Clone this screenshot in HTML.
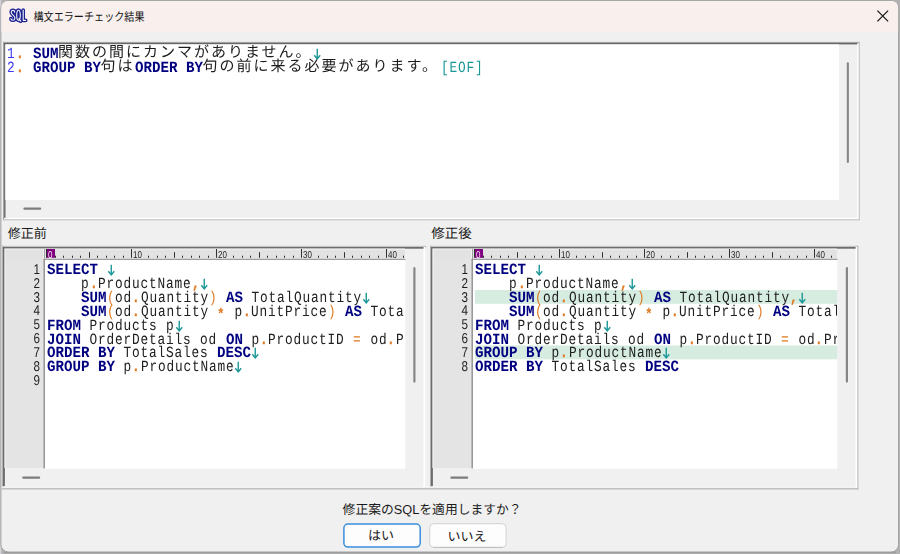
<!DOCTYPE html>
<html lang="ja"><head><meta charset="utf-8"><title>構文エラーチェック結果</title>
<style>
html,body{margin:0;padding:0}
body{width:900px;height:554px;position:relative;overflow:hidden;background:#b2b2b2;font-family:"Liberation Sans",sans-serif;text-rendering:geometricPrecision}
#chrome{position:absolute;left:0;top:0}
.pane{position:absolute;overflow:hidden;will-change:transform}
.r{position:absolute;left:0;height:14px;line-height:14px;white-space:pre;font-family:"Liberation Mono",monospace;font-size:15.6px;color:#202020}
.r span{position:absolute;top:0;transform:scaleX(.82);transform-origin:0 0;letter-spacing:1.006px}
.r span.k{transform:scaleX(.9081);letter-spacing:0}
.r span.j{transform:none}
.k{color:#000080;font-weight:bold}
.s{color:#df7a23}
.r span.e{transform:none}
.ar{position:absolute;left:0;top:0;overflow:visible}
.f{color:#1b9696}
.d{color:#df7a23;font-weight:bold;-webkit-text-stroke:0.25px #df7a23}
.r span.a{color:#df7a23;font-weight:bold;top:3px}
.n{color:#3d3df0}
.j{height:14px;overflow:visible}
.j i{position:absolute;left:0;top:0;font-style:normal;font-family:"Liberation Mono","Noto Sans CJK JP",monospace;font-size:15px;line-height:14px;letter-spacing:2px;color:#1c1c1c;white-space:nowrap}
.ln{position:absolute;width:30px;height:14px;line-height:14px;text-align:right;font-size:14.2px;color:#1e1e1e;transform:scaleX(.82);transform-origin:100% 0;margin-top:-0.4px}
.rn{position:absolute;top:1.5px;height:9px;line-height:9px;font-size:10px;color:#1e1e1e;transform:scaleX(.8);transform-origin:0 0}
.rn.z{color:#f4e6f4}
#uitext text{font-family:"Liberation Sans","Noto Sans CJK JP",sans-serif}
</style></head><body>
<svg id="chrome" width="900" height="554" viewBox="0 0 900 554">
<rect x="0" y="0" width="900" height="554" fill="#b2b2b2"/>
<rect x="0" y="0" width="1.3" height="554" fill="#d2d2d8"/>
<rect x="4" y="551.5" width="892" height="1.7" fill="#9a9a9a"/>
<rect x="0.9" y="0.6" width="897.7" height="551.4" rx="7.5" fill="#f0f0f0" stroke="#a2a2a2" stroke-width="1"/>
<path fill="#f9f0ee" d="M1.4 32.3V8.1Q1.4 1.1 8.4 1.1H891.1Q898.1 1.1 898.1 8.1V32.3Z"/>
<rect x="3" y="41.9" width="856.8" height="1.1" fill="#a3a3a3"/>
<rect x="4.1" y="43" width="854.6" height="1.4" fill="#666666"/>
<rect x="3" y="41.9" width="1.1" height="178.4" fill="#a3a3a3"/>
<rect x="4.1" y="43" width="1.4" height="176.2" fill="#666666"/>
<rect x="4.1" y="217.8" width="854.6" height="1.4" fill="#ffffff"/>
<rect x="3" y="219.2" width="856.8" height="1.1" fill="#c2c2c2"/>
<rect x="857.3" y="43" width="1.4" height="176.2" fill="#ffffff"/>
<rect x="858.7" y="41.9" width="1.1" height="178.4" fill="#c2c2c2"/>
<rect x="5.3" y="44.4" width="833.7" height="155.5" fill="#ffffff"/>
<rect x="846.8" y="62.2" width="2.1" height="100.8" rx="1" fill="#868686"/>
<rect x="23.4" y="207.4" width="17.8" height="2.3" rx="1" fill="#7c7c7c"/>
<rect x="2" y="245.8" width="424.4" height="1.2" fill="#c4c4c4"/>
<rect x="3.2" y="247" width="422" height="1.7" fill="#6c6c6c"/>
<rect x="2" y="245.8" width="1.2" height="240.9" fill="#b0b0b0"/>
<rect x="3" y="247" width="1.9" height="239.2" fill="#6c6c6c"/>
<rect x="423.5" y="247" width="1.7" height="239.7" fill="#ffffff"/>
<rect x="4.7" y="248.7" width="400.2" height="10.2" fill="#e2e2e2"/>
<rect x="43.4" y="258.8" width="361.9" height="1.3" fill="#9e9e9e"/>
<rect x="4.7" y="248.7" width="400.2" height="0.8" fill="#f3f3f3"/>
<rect x="4.7" y="258.8" width="38.5" height="209.1" fill="#e4e4e4"/>
<rect x="4.5" y="248.7" width="1" height="219.2" fill="#f3f3f3"/>
<rect x="43.2" y="249" width="0.9" height="10" fill="#f6f6f6"/>
<rect x="44" y="249" width="1" height="10" fill="#a0a0a0"/>
<rect x="43.4" y="259" width="1.6" height="209.3" fill="#989898"/>
<rect x="45" y="260.1" width="360.3" height="208.7" fill="#ffffff"/>
<rect x="46" y="249" width="1" height="8.8" fill="#303030"/>
<rect x="55" y="255.7" width="1" height="2.1" fill="#303030"/>
<rect x="63" y="255.7" width="1" height="2.1" fill="#303030"/>
<rect x="72" y="255.7" width="1" height="2.1" fill="#303030"/>
<rect x="80" y="255.7" width="1" height="2.1" fill="#303030"/>
<rect x="89" y="252.2" width="1" height="5.6" fill="#303030"/>
<rect x="97" y="255.7" width="1" height="2.1" fill="#303030"/>
<rect x="106" y="255.7" width="1" height="2.1" fill="#303030"/>
<rect x="114" y="255.7" width="1" height="2.1" fill="#303030"/>
<rect x="123" y="255.7" width="1" height="2.1" fill="#303030"/>
<rect x="131" y="249" width="1" height="8.8" fill="#303030"/>
<rect x="148" y="255.7" width="1" height="2.1" fill="#303030"/>
<rect x="157" y="255.7" width="1" height="2.1" fill="#303030"/>
<rect x="165" y="255.7" width="1" height="2.1" fill="#303030"/>
<rect x="174" y="252.2" width="1" height="5.6" fill="#303030"/>
<rect x="182" y="255.7" width="1" height="2.1" fill="#303030"/>
<rect x="191" y="255.7" width="1" height="2.1" fill="#303030"/>
<rect x="199" y="255.7" width="1" height="2.1" fill="#303030"/>
<rect x="208" y="255.7" width="1" height="2.1" fill="#303030"/>
<rect x="216" y="249" width="1" height="8.8" fill="#303030"/>
<rect x="233" y="255.7" width="1" height="2.1" fill="#303030"/>
<rect x="242" y="255.7" width="1" height="2.1" fill="#303030"/>
<rect x="250" y="255.7" width="1" height="2.1" fill="#303030"/>
<rect x="259" y="252.2" width="1" height="5.6" fill="#303030"/>
<rect x="267" y="255.7" width="1" height="2.1" fill="#303030"/>
<rect x="276" y="255.7" width="1" height="2.1" fill="#303030"/>
<rect x="284" y="255.7" width="1" height="2.1" fill="#303030"/>
<rect x="293" y="255.7" width="1" height="2.1" fill="#303030"/>
<rect x="301" y="249" width="1" height="8.8" fill="#303030"/>
<rect x="318" y="255.7" width="1" height="2.1" fill="#303030"/>
<rect x="327" y="255.7" width="1" height="2.1" fill="#303030"/>
<rect x="335" y="255.7" width="1" height="2.1" fill="#303030"/>
<rect x="344" y="252.2" width="1" height="5.6" fill="#303030"/>
<rect x="352" y="255.7" width="1" height="2.1" fill="#303030"/>
<rect x="361" y="255.7" width="1" height="2.1" fill="#303030"/>
<rect x="369" y="255.7" width="1" height="2.1" fill="#303030"/>
<rect x="378" y="255.7" width="1" height="2.1" fill="#303030"/>
<rect x="386" y="249" width="1" height="8.8" fill="#303030"/>
<rect x="403" y="255.7" width="1" height="2.1" fill="#303030"/>
<rect x="47" y="249" width="8" height="8.8" fill="#800080"/>
<rect x="413.3" y="267" width="2.2" height="115.7" rx="1.1" fill="#868686"/>
<rect x="22.2" y="476.6" width="18" height="2.2" rx="1.1" fill="#7c7c7c"/>
<rect x="430" y="245.8" width="428.5" height="1.2" fill="#c4c4c4"/>
<rect x="431.2" y="247" width="426.1" height="1.7" fill="#6c6c6c"/>
<rect x="430" y="245.8" width="1.2" height="240.9" fill="#b0b0b0"/>
<rect x="431" y="247" width="1.9" height="239.2" fill="#6c6c6c"/>
<rect x="855.6" y="247" width="1.7" height="239.7" fill="#ffffff"/>
<rect x="857.3" y="245.8" width="1.2" height="243.8" fill="#c2c2c2"/>
<rect x="432.7" y="248.7" width="404.2" height="10.2" fill="#e2e2e2"/>
<rect x="471.4" y="258.8" width="365.9" height="1.3" fill="#9e9e9e"/>
<rect x="432.7" y="248.7" width="404.2" height="0.8" fill="#f3f3f3"/>
<rect x="432.7" y="258.8" width="38.5" height="209.1" fill="#e4e4e4"/>
<rect x="432.5" y="248.7" width="1" height="219.2" fill="#f3f3f3"/>
<rect x="471.2" y="249" width="0.9" height="10" fill="#f6f6f6"/>
<rect x="472" y="249" width="1" height="10" fill="#a0a0a0"/>
<rect x="471.4" y="259" width="1.6" height="209.3" fill="#989898"/>
<rect x="473" y="260.1" width="364.3" height="208.7" fill="#ffffff"/>
<rect x="474" y="249" width="1" height="8.8" fill="#303030"/>
<rect x="483" y="255.7" width="1" height="2.1" fill="#303030"/>
<rect x="491" y="255.7" width="1" height="2.1" fill="#303030"/>
<rect x="500" y="255.7" width="1" height="2.1" fill="#303030"/>
<rect x="508" y="255.7" width="1" height="2.1" fill="#303030"/>
<rect x="517" y="252.2" width="1" height="5.6" fill="#303030"/>
<rect x="525" y="255.7" width="1" height="2.1" fill="#303030"/>
<rect x="534" y="255.7" width="1" height="2.1" fill="#303030"/>
<rect x="542" y="255.7" width="1" height="2.1" fill="#303030"/>
<rect x="551" y="255.7" width="1" height="2.1" fill="#303030"/>
<rect x="559" y="249" width="1" height="8.8" fill="#303030"/>
<rect x="576" y="255.7" width="1" height="2.1" fill="#303030"/>
<rect x="585" y="255.7" width="1" height="2.1" fill="#303030"/>
<rect x="593" y="255.7" width="1" height="2.1" fill="#303030"/>
<rect x="602" y="252.2" width="1" height="5.6" fill="#303030"/>
<rect x="610" y="255.7" width="1" height="2.1" fill="#303030"/>
<rect x="619" y="255.7" width="1" height="2.1" fill="#303030"/>
<rect x="627" y="255.7" width="1" height="2.1" fill="#303030"/>
<rect x="636" y="255.7" width="1" height="2.1" fill="#303030"/>
<rect x="644" y="249" width="1" height="8.8" fill="#303030"/>
<rect x="661" y="255.7" width="1" height="2.1" fill="#303030"/>
<rect x="670" y="255.7" width="1" height="2.1" fill="#303030"/>
<rect x="678" y="255.7" width="1" height="2.1" fill="#303030"/>
<rect x="687" y="252.2" width="1" height="5.6" fill="#303030"/>
<rect x="695" y="255.7" width="1" height="2.1" fill="#303030"/>
<rect x="704" y="255.7" width="1" height="2.1" fill="#303030"/>
<rect x="712" y="255.7" width="1" height="2.1" fill="#303030"/>
<rect x="721" y="255.7" width="1" height="2.1" fill="#303030"/>
<rect x="729" y="249" width="1" height="8.8" fill="#303030"/>
<rect x="746" y="255.7" width="1" height="2.1" fill="#303030"/>
<rect x="755" y="255.7" width="1" height="2.1" fill="#303030"/>
<rect x="763" y="255.7" width="1" height="2.1" fill="#303030"/>
<rect x="772" y="252.2" width="1" height="5.6" fill="#303030"/>
<rect x="780" y="255.7" width="1" height="2.1" fill="#303030"/>
<rect x="789" y="255.7" width="1" height="2.1" fill="#303030"/>
<rect x="797" y="255.7" width="1" height="2.1" fill="#303030"/>
<rect x="806" y="255.7" width="1" height="2.1" fill="#303030"/>
<rect x="814" y="249" width="1" height="8.8" fill="#303030"/>
<rect x="831" y="255.7" width="1" height="2.1" fill="#303030"/>
<rect x="475" y="249" width="8" height="8.8" fill="#800080"/>
<rect x="845.8" y="267" width="2.2" height="115.7" rx="1.1" fill="#868686"/>
<rect x="450.3" y="476.6" width="18" height="2.2" rx="1.1" fill="#7c7c7c"/>
<rect x="2" y="486.7" width="855.3" height="1.2" fill="#ffffff"/>
<rect x="2" y="487.8" width="856.5" height="1.8" fill="#c2c2c2"/>
<rect x="475" y="289.95" width="362.3" height="13.875" fill="#d6ece1"/>
<rect x="475" y="345.45" width="362.3" height="13.875" fill="#d6ece1"/>
<rect x="343.9" y="524.0" width="76.3" height="23.1" rx="4" fill="#fdfdfd" stroke="#3a8edb" stroke-width="1.5"/>
<rect x="429.8" y="523.7" width="76.3" height="23.7" rx="4" fill="#fdfdfd" stroke="#d2d2d2" stroke-width="1"/>
<path d="M433 547.4H503" stroke="#bcbcbc" stroke-width="1" fill="none"/>
<path d="M877.4 10.6L888.1 21.4M888.1 10.6L877.4 21.4" stroke="#1b1b1b" stroke-width="1.3" fill="none"/>
<path d="M14.7 12.1C14.5 9.9 11.2 9.8 11.2 12.3C11.2 14.9 14.9 15.3 14.9 18.1C14.9 20.9 11.1 20.8 10.9 18.6M18.5 10.2C16.9 10.2 16.7 12.5 16.7 15.3C16.7 18.1 16.9 20.4 18.5 20.4C20.1 20.4 20.3 18.1 20.3 15.3C20.3 12.5 20.1 10.2 18.5 10.2ZM18.9 18.6L20.7 21.2M23.2 10V20.3H25.7" stroke="#fdfbfb" stroke-width="5" fill="none" stroke-linecap="round" stroke-linejoin="round" opacity="0.8"/>
<path d="M14.7 12.1C14.5 9.9 11.2 9.8 11.2 12.3C11.2 14.9 14.9 15.3 14.9 18.1C14.9 20.9 11.1 20.8 10.9 18.6M18.5 10.2C16.9 10.2 16.7 12.5 16.7 15.3C16.7 18.1 16.9 20.4 18.5 20.4C20.1 20.4 20.3 18.1 20.3 15.3C20.3 12.5 20.1 10.2 18.5 10.2ZM18.9 18.6L20.7 21.2M23.2 10V20.3H25.7" stroke="#1e1e8c" stroke-width="3.7" fill="none" stroke-linecap="round" stroke-linejoin="round"/>
<path d="M14.7 12.1C14.5 9.9 11.2 9.8 11.2 12.3C11.2 14.9 14.9 15.3 14.9 18.1C14.9 20.9 11.1 20.8 10.9 18.6M18.5 10.2C16.9 10.2 16.7 12.5 16.7 15.3C16.7 18.1 16.9 20.4 18.5 20.4C20.1 20.4 20.3 18.1 20.3 15.3C20.3 12.5 20.1 10.2 18.5 10.2ZM18.9 18.6L20.7 21.2M23.2 10V20.3H25.7" stroke="#e8f2fb" stroke-width="1.15" fill="none" stroke-linecap="round" stroke-linejoin="round"/>
<g id="uitext">
<text x="33.5" y="21" font-size="12" fill="#161616" textLength="111" lengthAdjust="spacingAndGlyphs">構文エラーチェック結果</text>
<text x="7.8" y="238" font-size="13" fill="#1a1a1a">修正前</text>
<text x="431.2" y="237.8" font-size="13.5" fill="#1a1a1a">修正後</text>
<text x="342.6" y="513.6" font-size="13" fill="#1a1a1a" textLength="179" lengthAdjust="spacingAndGlyphs">修正案のSQLを適用しますか？</text>
<text x="368" y="540.2" font-size="13" fill="#1a1a1a">はい</text>
<text x="447.5" y="540.6" font-size="13" fill="#1a1a1a">いいえ</text>
</g>
</svg>
<div class="pane" style="left:5px;top:44px;width:834px;height:156px">
<div class="r" style="top:3px"><span class="n" style="left:2px">1</span><span class="d" style="left:10.5px">.</span><span style="left:19px"> </span><span class="k" style="left:27.5px">SUM</span><span class="j" style="left:53px;width:255px"><i>関数の間にカンマがありません。</i></span><span class="e" style="left:308px"><svg class="ar" width="9" height="15" viewBox="0 0 9 15"><path d="M4.25 1.7V11.5M1.3 8.3L4.25 12L7.2 8.3" stroke="#1d9898" stroke-width="1.4" fill="none" stroke-linejoin="miter"/></svg></span></div>
<div class="r" style="top:17px"><span class="n" style="left:2px">2</span><span class="d" style="left:10.5px">.</span><span style="left:19px"> </span><span class="k" style="left:27.5px">GROUP BY</span><span class="j" style="left:95.5px;width:34px"><i>句は</i></span><span class="k" style="left:129.5px">ORDER BY</span><span class="j" style="left:197.5px;width:238px"><i>句の前に来る必要があります。</i></span><span class="f" style="left:435.5px">[EOF]</span></div>
</div>
<div class="pane" style="left:5px;top:249px;width:400px;height:220px">
<div class="rn z" style="left:43.2px">0</div><div class="rn" style="left:127.5px">10</div><div class="rn" style="left:212.5px">20</div><div class="rn" style="left:297.5px">30</div><div class="rn" style="left:382.5px">40</div><div class="ln" style="top:14.2px;left:5px">1</div><div class="ln" style="top:28.075px;left:5px">2</div><div class="ln" style="top:41.95px;left:5px">3</div><div class="ln" style="top:55.825px;left:5px">4</div><div class="ln" style="top:69.7px;left:5px">5</div><div class="ln" style="top:83.575px;left:5px">6</div><div class="ln" style="top:97.45px;left:5px">7</div><div class="ln" style="top:111.325px;left:5px">8</div><div class="ln" style="top:125.2px;left:5px">9</div>
<div class="r" style="top:14.2px"><span class="k" style="left:42px">SELECT</span><span style="left:93px"> </span><span class="e" style="left:101.5px"><svg class="ar" width="9" height="15" viewBox="0 0 9 15"><path d="M4.25 1.7V11.5M1.3 8.3L4.25 12L7.2 8.3" stroke="#1d9898" stroke-width="1.4" fill="none" stroke-linejoin="miter"/></svg></span></div>
<div class="r" style="top:28.075px"><span style="left:42px">    p</span><span class="d" style="left:84.5px">.</span><span style="left:93px">ProductName</span><span class="d" style="left:186.5px">,</span><span class="e" style="left:195px"><svg class="ar" width="9" height="15" viewBox="0 0 9 15"><path d="M4.25 1.7V11.5M1.3 8.3L4.25 12L7.2 8.3" stroke="#1d9898" stroke-width="1.4" fill="none" stroke-linejoin="miter"/></svg></span></div>
<div class="r" style="top:41.95px"><span style="left:42px">    </span><span class="k" style="left:76px">SUM</span><span class="s" style="left:101.5px">(</span><span style="left:110px">od</span><span class="d" style="left:127px">.</span><span style="left:135.5px">Quantity</span><span class="s" style="left:203.5px">)</span><span style="left:212px"> </span><span class="k" style="left:220.5px">AS</span><span style="left:237.5px"> TotalQuantity</span><span class="e" style="left:356.5px"><svg class="ar" width="9" height="15" viewBox="0 0 9 15"><path d="M4.25 1.7V11.5M1.3 8.3L4.25 12L7.2 8.3" stroke="#1d9898" stroke-width="1.4" fill="none" stroke-linejoin="miter"/></svg></span></div>
<div class="r" style="top:55.825px"><span style="left:42px">    </span><span class="k" style="left:76px">SUM</span><span class="s" style="left:101.5px">(</span><span style="left:110px">od</span><span class="d" style="left:127px">.</span><span style="left:135.5px">Quantity </span><span class="a" style="left:212px">*</span><span style="left:220.5px"> p</span><span class="d" style="left:237.5px">.</span><span style="left:246px">UnitPrice</span><span class="s" style="left:322.5px">)</span><span style="left:331px"> </span><span class="k" style="left:339.5px">AS</span><span style="left:356.5px"> TotalSales</span><span class="e" style="left:450px"><svg class="ar" width="9" height="15" viewBox="0 0 9 15"><path d="M4.25 1.7V11.5M1.3 8.3L4.25 12L7.2 8.3" stroke="#1d9898" stroke-width="1.4" fill="none" stroke-linejoin="miter"/></svg></span></div>
<div class="r" style="top:69.7px"><span class="k" style="left:42px">FROM</span><span style="left:76px"> Products p</span><span class="e" style="left:169.5px"><svg class="ar" width="9" height="15" viewBox="0 0 9 15"><path d="M4.25 1.7V11.5M1.3 8.3L4.25 12L7.2 8.3" stroke="#1d9898" stroke-width="1.4" fill="none" stroke-linejoin="miter"/></svg></span></div>
<div class="r" style="top:83.575px"><span class="k" style="left:42px">JOIN</span><span style="left:76px"> OrderDetails od </span><span class="k" style="left:220.5px">ON</span><span style="left:237.5px"> p</span><span class="d" style="left:254.5px">.</span><span style="left:263px">ProductID </span><span class="s" style="left:348px">=</span><span style="left:356.5px"> od</span><span class="d" style="left:382px">.</span><span style="left:390.5px">ProductID</span><span class="e" style="left:467px"><svg class="ar" width="9" height="15" viewBox="0 0 9 15"><path d="M4.25 1.7V11.5M1.3 8.3L4.25 12L7.2 8.3" stroke="#1d9898" stroke-width="1.4" fill="none" stroke-linejoin="miter"/></svg></span></div>
<div class="r" style="top:97.45px"><span class="k" style="left:42px">ORDER BY</span><span style="left:110px"> TotalSales </span><span class="k" style="left:212px">DESC</span><span class="e" style="left:246px"><svg class="ar" width="9" height="15" viewBox="0 0 9 15"><path d="M4.25 1.7V11.5M1.3 8.3L4.25 12L7.2 8.3" stroke="#1d9898" stroke-width="1.4" fill="none" stroke-linejoin="miter"/></svg></span></div>
<div class="r" style="top:111.325px"><span class="k" style="left:42px">GROUP BY</span><span style="left:110px"> p</span><span class="d" style="left:127px">.</span><span style="left:135.5px">ProductName</span><span class="e" style="left:229px"><svg class="ar" width="9" height="15" viewBox="0 0 9 15"><path d="M4.25 1.7V11.5M1.3 8.3L4.25 12L7.2 8.3" stroke="#1d9898" stroke-width="1.4" fill="none" stroke-linejoin="miter"/></svg></span></div>
</div>
<div class="pane" style="left:433px;top:249px;width:404px;height:220px">
<div class="rn z" style="left:43.2px">0</div><div class="rn" style="left:127.5px">10</div><div class="rn" style="left:212.5px">20</div><div class="rn" style="left:297.5px">30</div><div class="rn" style="left:382.5px">40</div><div class="ln" style="top:14.2px;left:5px">1</div><div class="ln" style="top:28.075px;left:5px">2</div><div class="ln" style="top:41.95px;left:5px">3</div><div class="ln" style="top:55.825px;left:5px">4</div><div class="ln" style="top:69.7px;left:5px">5</div><div class="ln" style="top:83.575px;left:5px">6</div><div class="ln" style="top:97.45px;left:5px">7</div><div class="ln" style="top:111.325px;left:5px">8</div>
<div class="r" style="top:14.2px"><span class="k" style="left:42px">SELECT</span><span style="left:93px"> </span><span class="e" style="left:101.5px"><svg class="ar" width="9" height="15" viewBox="0 0 9 15"><path d="M4.25 1.7V11.5M1.3 8.3L4.25 12L7.2 8.3" stroke="#1d9898" stroke-width="1.4" fill="none" stroke-linejoin="miter"/></svg></span></div>
<div class="r" style="top:28.075px"><span style="left:42px">    p</span><span class="d" style="left:84.5px">.</span><span style="left:93px">ProductName</span><span class="d" style="left:186.5px">,</span><span class="e" style="left:195px"><svg class="ar" width="9" height="15" viewBox="0 0 9 15"><path d="M4.25 1.7V11.5M1.3 8.3L4.25 12L7.2 8.3" stroke="#1d9898" stroke-width="1.4" fill="none" stroke-linejoin="miter"/></svg></span></div>
<div class="r" style="top:41.95px"><span style="left:42px">    </span><span class="k" style="left:76px">SUM</span><span class="s" style="left:101.5px">(</span><span style="left:110px">od</span><span class="d" style="left:127px">.</span><span style="left:135.5px">Quantity</span><span class="s" style="left:203.5px">)</span><span style="left:212px"> </span><span class="k" style="left:220.5px">AS</span><span style="left:237.5px"> TotalQuantity</span><span class="d" style="left:356.5px">,</span><span class="e" style="left:365px"><svg class="ar" width="9" height="15" viewBox="0 0 9 15"><path d="M4.25 1.7V11.5M1.3 8.3L4.25 12L7.2 8.3" stroke="#1d9898" stroke-width="1.4" fill="none" stroke-linejoin="miter"/></svg></span></div>
<div class="r" style="top:55.825px"><span style="left:42px">    </span><span class="k" style="left:76px">SUM</span><span class="s" style="left:101.5px">(</span><span style="left:110px">od</span><span class="d" style="left:127px">.</span><span style="left:135.5px">Quantity </span><span class="a" style="left:212px">*</span><span style="left:220.5px"> p</span><span class="d" style="left:237.5px">.</span><span style="left:246px">UnitPrice</span><span class="s" style="left:322.5px">)</span><span style="left:331px"> </span><span class="k" style="left:339.5px">AS</span><span style="left:356.5px"> TotalSales</span><span class="e" style="left:450px"><svg class="ar" width="9" height="15" viewBox="0 0 9 15"><path d="M4.25 1.7V11.5M1.3 8.3L4.25 12L7.2 8.3" stroke="#1d9898" stroke-width="1.4" fill="none" stroke-linejoin="miter"/></svg></span></div>
<div class="r" style="top:69.7px"><span class="k" style="left:42px">FROM</span><span style="left:76px"> Products p</span><span class="e" style="left:169.5px"><svg class="ar" width="9" height="15" viewBox="0 0 9 15"><path d="M4.25 1.7V11.5M1.3 8.3L4.25 12L7.2 8.3" stroke="#1d9898" stroke-width="1.4" fill="none" stroke-linejoin="miter"/></svg></span></div>
<div class="r" style="top:83.575px"><span class="k" style="left:42px">JOIN</span><span style="left:76px"> OrderDetails od </span><span class="k" style="left:220.5px">ON</span><span style="left:237.5px"> p</span><span class="d" style="left:254.5px">.</span><span style="left:263px">ProductID </span><span class="s" style="left:348px">=</span><span style="left:356.5px"> od</span><span class="d" style="left:382px">.</span><span style="left:390.5px">ProductID</span><span class="e" style="left:467px"><svg class="ar" width="9" height="15" viewBox="0 0 9 15"><path d="M4.25 1.7V11.5M1.3 8.3L4.25 12L7.2 8.3" stroke="#1d9898" stroke-width="1.4" fill="none" stroke-linejoin="miter"/></svg></span></div>
<div class="r" style="top:97.45px"><span class="k" style="left:42px">GROUP BY</span><span style="left:110px"> p</span><span class="d" style="left:127px">.</span><span style="left:135.5px">ProductName</span><span class="e" style="left:229px"><svg class="ar" width="9" height="15" viewBox="0 0 9 15"><path d="M4.25 1.7V11.5M1.3 8.3L4.25 12L7.2 8.3" stroke="#1d9898" stroke-width="1.4" fill="none" stroke-linejoin="miter"/></svg></span></div>
<div class="r" style="top:111.325px"><span class="k" style="left:42px">ORDER BY</span><span style="left:110px"> TotalSales </span><span class="k" style="left:212px">DESC</span></div>
</div>
</body></html>
